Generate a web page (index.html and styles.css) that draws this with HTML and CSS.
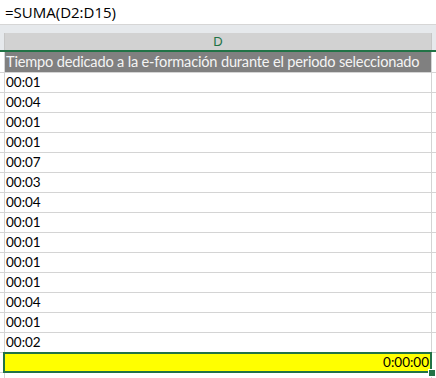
FILE: index.html
```html
<!DOCTYPE html>
<html lang="es">
<head>
<meta charset="utf-8">
<link rel="stylesheet" href="styles.css">
</head>
<body>
<div class="formula">=SUMA(D2:D15)</div>
<div class="gap"></div>
<div class="colhead"><div class="lead"></div><div class="cell col">D</div><div class="trail"></div></div>
<div class="row title"><div class="lead"></div><div class="cell">Tiempo dedicado a la e-formación durante el periodo seleccionado</div><div class="trail"></div></div>
<div class="row"><div class="lead"></div><div class="cell">00:01</div><div class="trail"></div></div>
<div class="row"><div class="lead"></div><div class="cell">00:04</div><div class="trail"></div></div>
<div class="row"><div class="lead"></div><div class="cell">00:01</div><div class="trail"></div></div>
<div class="row"><div class="lead"></div><div class="cell">00:01</div><div class="trail"></div></div>
<div class="row"><div class="lead"></div><div class="cell">00:07</div><div class="trail"></div></div>
<div class="row"><div class="lead"></div><div class="cell">00:03</div><div class="trail"></div></div>
<div class="row"><div class="lead"></div><div class="cell">00:04</div><div class="trail"></div></div>
<div class="row"><div class="lead"></div><div class="cell">00:01</div><div class="trail"></div></div>
<div class="row"><div class="lead"></div><div class="cell">00:01</div><div class="trail"></div></div>
<div class="row"><div class="lead"></div><div class="cell">00:01</div><div class="trail"></div></div>
<div class="row"><div class="lead"></div><div class="cell">00:01</div><div class="trail"></div></div>
<div class="row"><div class="lead"></div><div class="cell">00:04</div><div class="trail"></div></div>
<div class="row"><div class="lead"></div><div class="cell">00:01</div><div class="trail"></div></div>
<div class="row"><div class="lead"></div><div class="cell">00:02</div><div class="trail"></div></div>
<div class="row total"><div class="lead"></div><div class="cell sel">0:00:00<span class="handle"></span></div><div class="trail"></div></div>
<div class="row last"><div class="lead"></div><div class="cell"></div><div class="trail"></div></div>
</body>
</html>
```
FILE: styles.css
```css
html, body {
  margin: 0;
  padding: 0;
  background: #ffffff;
  width: 436px;
  height: 378px;
  overflow: hidden;
  font-family: "Lato", "Liberation Sans", sans-serif;
  color: #000;
}
.formula {
  height: 24px;
  line-height: 24px;
  padding-left: 5px;
  font-family: "Open Sans", sans-serif;
  font-size: 15px;
  border-bottom: 1px solid #d6d6d6;
}
.gap {
  height: 8px;
  background: #e6e9ec;
}
.colhead, .row {
  display: flex;
}
.lead {
  width: 4px;
  flex: none;
}
.trail {
  flex: 1;
}
.colhead {
  height: 17px;
  background: #e6e9ec;
  border-bottom: 2px solid #217346;
}
.colhead .lead, .colhead .trail {
  background: #e6e9ec;
}
.colhead .trail { border-left: 1px solid #c6c6c6; }
.cell {
  width: 427px;
  flex: none;
  border-left: 1px solid #d4d4d4;
  box-sizing: border-box;
  font-size: 13.5px;
  white-space: nowrap;
  overflow: visible;
}
.cell.col {
  background: #d2d2d2;
  color: #217346;
  text-align: center;
  line-height: 17px;
  font-family: "Liberation Sans", sans-serif;
  font-size: 13px;
  border-left: 1px solid #c6c6c6;
}
.row {
  height: 19px;
  line-height: 19px;
  border-bottom: 1px solid #d4d4d4;
}
.row .trail { border-left: 1px solid #d4d4d4; }
.row.title {
  height: 20px;
  line-height: 20px;
}
.row .cell { padding-left: 1px; }
.row.title .cell {
  background: #808080;
  color: #f4f4f4;
  padding-left: 1px;
  font-size: 14.6px;
  letter-spacing: -0.18px;
}
.total { position: relative; }
.cell.sel {
  position: relative;
  background: #ffff00;
  text-align: right;
  padding-right: 2px;
  outline: 2px solid #217346;
  outline-offset: -1px;
  z-index: 1;
}
.handle {
  position: absolute;
  right: -5px;
  bottom: -5px;
  width: 6px;
  height: 6px;
  background: #217346;
  border: 1px solid #fff;
}
.row.last { border-bottom: none; }
```
